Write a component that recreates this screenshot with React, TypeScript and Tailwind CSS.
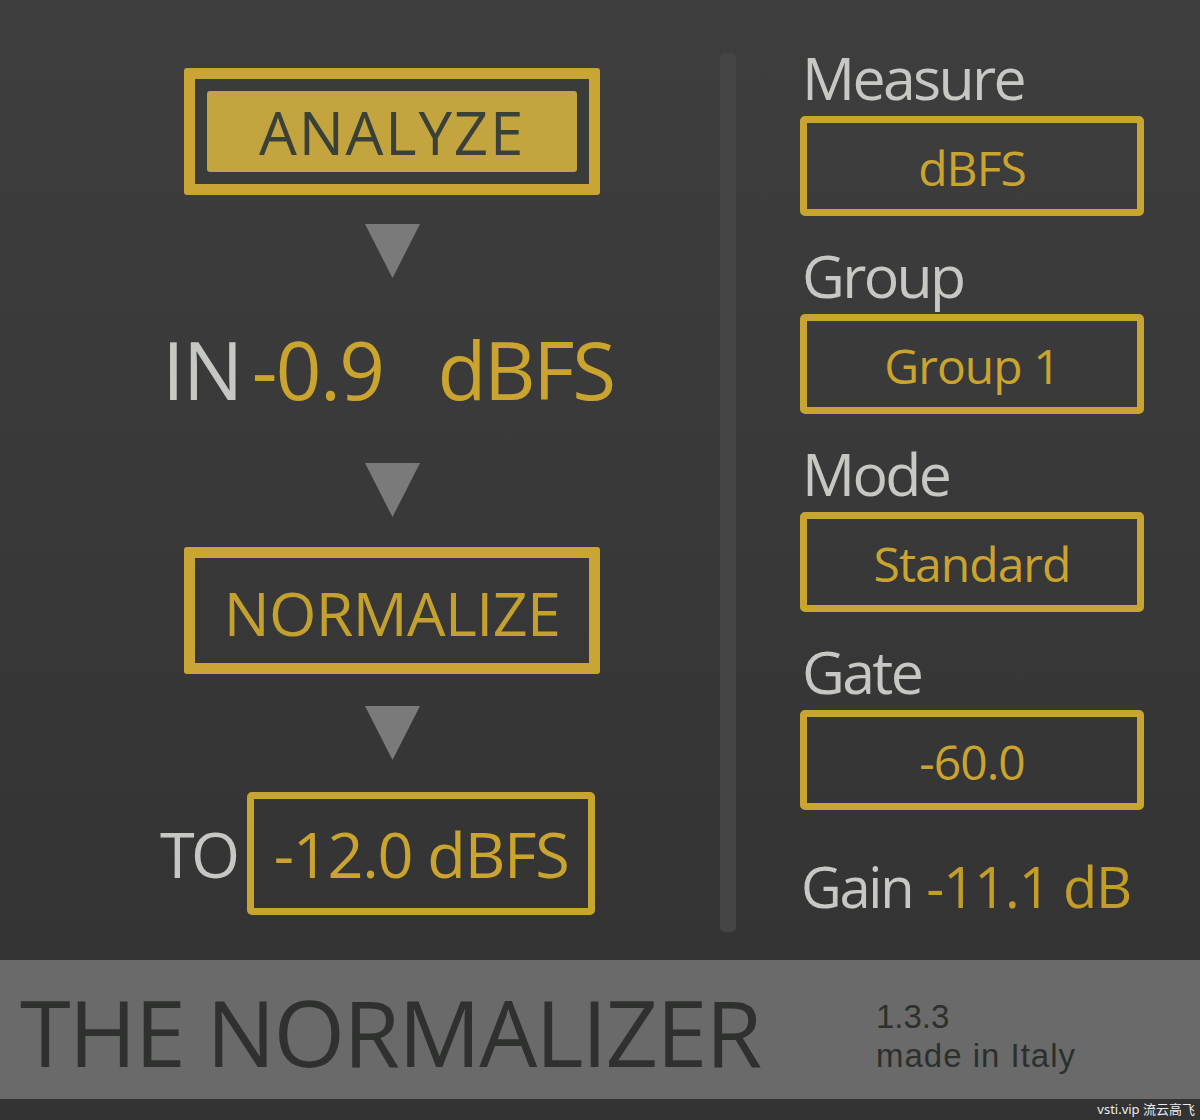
import React from "react";

const font = { fontFamily: '"Open Sans", "Noto Sans", sans-serif' };

const Arrow = () => (
  <svg width="55" height="54" viewBox="0 0 55 54" className="block">
    <polygon points="0,0 55,0 27.5,54" fill="#7a7a7a" />
  </svg>
);

const Field = ({ label, value }: { label: string; value: string }) => (
  <div className="flex flex-col">
    <span className="h-[59px] text-[59px] leading-none tracking-[-0.045em] text-[#c6c8c4] pl-[2px]">
      {label}
    </span>
    <div className="mt-[9px] h-[100px] w-[344px] border-[7px] border-[#c8a431] rounded-[5px] flex items-center justify-center">
      <span className="pt-[4px] text-[48px] leading-none tracking-[-0.02em] text-[#caa42f]">{value}</span>
    </div>
  </div>
);

export default function App() {
  return (
    <div className="w-[1200px] h-[1120px] flex flex-col overflow-hidden" style={font}>
      <div className="h-[960px] flex bg-linear-to-b from-[#3e3e3e] to-[#343434]">
        {/* left: analyze / normalize flow */}
        <div className="w-[720px] flex">
          <div className="ml-[160px] w-[464px] flex flex-col items-center pt-[68px]">
            <div className="w-[416px] h-[127px] border-[11px] border-[#c8a534] rounded-[3px] bg-[#393c39] p-[12px]">
              <div className="w-full h-full bg-[#c4a43e] rounded-[3px] flex items-center justify-center">
                <span className="text-[60px] leading-none tracking-[0.03em] text-[#394139]">ANALYZE</span>
              </div>
            </div>
            <div className="mt-[29px]">
              <Arrow />
            </div>
            <div className="mt-[51px] h-[80px] flex items-start text-[80px] leading-none pr-[8px]">
              <span className="text-[#c6c8c4] tracking-[-0.02em]">IN</span>
              <span className="ml-[10px] text-[#caa42f] tracking-[-0.02em]">-0.9</span>
              <span className="ml-[54px] text-[#caa42f] tracking-[-0.03em]">dBFS</span>
            </div>
            <div className="mt-[54px]">
              <Arrow />
            </div>
            <div className="mt-[30px] w-[416px] h-[127px] border-[11px] border-[#c8a534] rounded-[3px] flex items-center justify-center">
              <span className="text-[61px] leading-none tracking-[-0.01em] text-[#c4a02e] pt-[4px]">NORMALIZE</span>
            </div>
            <div className="mt-[32px]">
              <Arrow />
            </div>
            <div className="mt-[32px] self-start flex items-center">
              <span className="text-[63px] leading-none text-[#c6c8c4] tracking-[-0.06em]">TO</span>
              <div className="ml-[11px] w-[348px] h-[123px] border-[7px] border-[#c8a431] rounded-[5px] flex items-center justify-center">
                <span className="text-[63px] leading-none text-[#caa42f] tracking-[-0.02em]">-12.0 dBFS</span>
              </div>
            </div>
          </div>
        </div>

        {/* divider */}
        <div className="mt-[53px] w-[16px] h-[879px] rounded-[5px] bg-[#454545]" />

        {/* right: settings */}
        <div className="ml-[64px] pt-[48px] flex flex-col">
          <Field label="Measure" value="dBFS" />
          <div className="mt-[30px]">
            <Field label="Group" value="Group 1" />
          </div>
          <div className="mt-[30px]">
            <Field label="Mode" value="Standard" />
          </div>
          <div className="mt-[30px]">
            <Field label="Gate" value="-60.0" />
          </div>
          <div className="mt-[48px] flex text-[56px] leading-none pl-[1px]">
            <span className="text-[#c6c8c4] tracking-[-0.04em]">Gain</span>
            <span className="ml-[14px] text-[#c29d28] tracking-[-0.02em]">-11.1 dB</span>
          </div>
        </div>
      </div>

      {/* footer */}
      <div className="h-[139px] bg-[#6a6a6a] flex">
        <div className="w-[876px] pl-[20px] pt-[26px]">
          <span className="text-[92px] leading-none tracking-[-0.02em] text-[#2f312f] whitespace-nowrap">
            THE NORMALIZER
          </span>
        </div>
        <div
          className="pt-[37px] flex flex-col text-[33px] leading-[39px] text-[#2c302c]"
          style={{ fontFamily: '"Liberation Sans", Arial, sans-serif' }}
        >
          <span>1.3.3</span>
          <span className="tracking-[0.03em]">made in Italy</span>
        </div>
      </div>
      <div className="h-[21px] bg-[#333333] flex items-center justify-end pr-[5px]">
        <span
          className="text-[13px] leading-none text-[#ececec]"
          style={{ fontFamily: '"Noto Sans", "Noto Sans CJK SC", sans-serif' }}
        >
          vsti.vip 流云高飞
        </span>
      </div>
    </div>
  );
}
